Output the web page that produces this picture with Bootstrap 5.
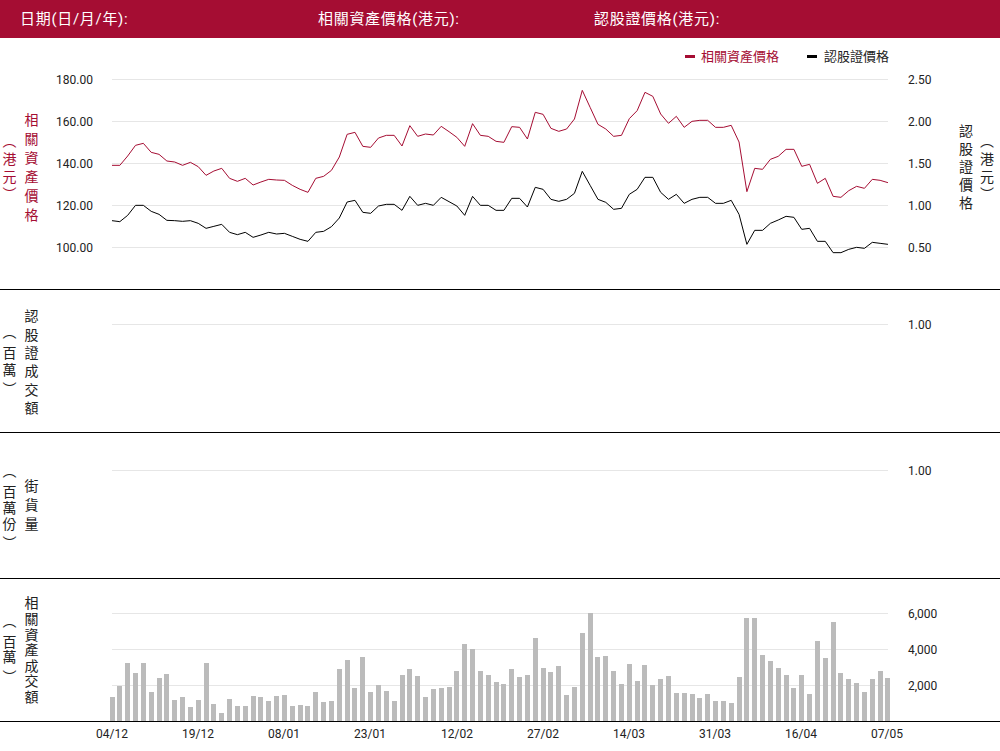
<!DOCTYPE html>
<html lang="zh-Hant">
<head>
<meta charset="utf-8">
<title>認股證走勢</title>
<link href="https://cdn.jsdelivr.net/npm/bootstrap@5.3.0/dist/css/bootstrap.min.css" rel="stylesheet">
<style>
html,body{margin:0;background:#fff;overflow:hidden}
body{font-family:Roboto,"Noto Sans CJK TC",sans-serif;color:#222;font-size:12px}
.top-bar{height:38px;background:#a50d33;color:#fff;font-size:15px;letter-spacing:.7px;line-height:38px}
.f1{width:318px;padding-left:20px}
.f2{width:276px}
.panel-a{height:252px}
.panel-b{height:143px}
.panel-c{height:146px}
.panel-d{height:143px}
.rule-b{border-bottom:1px solid #000}
.side-l{width:48px;flex:none;padding-left:1.5px;gap:8px}
.side-r{width:48px;flex:none;padding-left:6px;gap:7px}
.pad-a{padding-top:11px}
.pad-b{padding-top:6px}
.pad-c{padding-top:4px}
.pad-d{padding-top:2px}
.vtext{writing-mode:vertical-rl;font-size:14px;line-height:14px;white-space:nowrap;width:14px}
.s19{letter-spacing:5px}
.s18{letter-spacing:4.3px}
.s18r{letter-spacing:4px}
.s16{letter-spacing:1.6px}
.sp18{letter-spacing:3.7px}
.sp17{letter-spacing:2.7px}
.sp16{letter-spacing:2px}
.sp15{letter-spacing:1.6px}
.open-gap{letter-spacing:6.5px}
.close-gap{letter-spacing:5.5px}
.nudge2{margin-top:2px}
.lift4{margin-bottom:4px}
.lift2{margin-bottom:2px}
.crim{color:#a50d33}
.plot-col{width:904px;flex:none}
.legend-row{height:30px;padding-right:63px;padding-top:7px;gap:28px;font-size:13px;line-height:14px}
.dash{width:10px;height:3px}
.dash-red{background:#a50d33;margin-right:6px}
.dash-black{background:#000;margin-right:7px}
svg{display:block}
svg text{font-family:Roboto,"Noto Sans CJK TC",sans-serif;font-size:12px;fill:#222}
.grid-l{stroke:#e6e6e6;stroke-width:1;shape-rendering:crispEdges}
</style>
</head>
<body>
<div class="top-bar d-flex">
  <div class="f1">日期(日/月/年):</div>
  <div class="f2">相關資產價格(港元):</div>
  <div>認股證價格(港元):</div>
</div>

<div class="panel-a rule-b d-flex">
  <div class="side-l pad-a d-flex align-items-center">
    <div class="vtext crim sp18">（港元）</div>
    <div class="vtext crim s19 nudge2">相關資產價格</div>
  </div>
  <div class="plot-col">
    <div class="legend-row d-flex justify-content-end">
      <div class="d-flex align-items-center crim"><span class="dash dash-red"></span>相關資產價格</div>
      <div class="d-flex align-items-center"><span class="dash dash-black"></span>認股證價格</div>
    </div>
    <svg id="p1" width="904" height="221" viewBox="48 68 904 221"></svg>
  </div>
  <div class="side-r pad-a d-flex align-items-center">
    <div class="vtext s18r">認股證價格</div>
    <div class="vtext sp18">（港元）</div>
  </div>
</div>

<div class="panel-b rule-b d-flex">
  <div class="side-l pad-b d-flex align-items-center">
    <div class="vtext sp17 lift4"><span class="open-gap">（</span>百<span class="close-gap">萬</span>）</div>
    <div class="vtext s18">認股證成交額</div>
  </div>
  <svg id="p2" width="904" height="142" viewBox="48 290 904 142"></svg>
</div>

<div class="panel-c rule-b d-flex">
  <div class="side-l pad-c d-flex align-items-center">
    <div class="vtext sp16"><span class="open-gap">（</span>百萬<span class="close-gap">份</span>）</div>
    <div class="vtext s19">街貨量</div>
  </div>
  <svg id="p3" width="904" height="145" viewBox="48 433 904 145"></svg>
</div>

<div class="panel-d rule-b d-flex">
  <div class="side-l pad-d d-flex align-items-center">
    <div class="vtext sp15 lift2"><span class="open-gap">（</span>百<span class="close-gap">萬</span>）</div>
    <div class="vtext s16">相關資產成交額</div>
  </div>
  <svg id="p4" width="904" height="142" viewBox="48 579 904 142"></svg>
</div>

<svg id="p5" width="1000" height="29" viewBox="0 722 1000 29"></svg>

<script>
var NS='http://www.w3.org/2000/svg';
function add(id,tag,attrs,txt){var e=document.createElementNS(NS,tag);for(var k in attrs)e.setAttribute(k,attrs[k]);if(txt)e.textContent=txt;document.getElementById(id).appendChild(e);}
function grid(id,y){add(id,'line',{x1:112,x2:888,y1:y+.5,y2:y+.5,'class':'grid-l'});}
function tick(id,x,y,t,a){add(id,'text',{x:x,y:y+4.5,'text-anchor':a},t);}
var STEP=7.838;
var red=[286,286,258,226,220,247,253,273,276,286,277,290,316,303,295,325,334,325,345,336,328,330,331,346,358,367,325,319,301,261,193,187,229,232,
204,196,196,228,167,199,192,195,169,185,202,229,161,196,199,214,217,170,172,207,127,133,175,184,177,147,61,112,163,177,199,196,146,122,
67,79,132,160,139,172,154,151,151,172,172,166,216,365,295,298,268,259,238,238,289,283,340,325,379,382,362,349,355,328,331,338];
var blk=[452,455,436,406,406,424,433,451,452,454,452,460,475,469,463,487,494,487,502,495,487,492,490,499,508,514,487,484,470,444,396,391,427,430,
408,403,403,421,379,406,400,406,382,395,408,436,379,406,406,421,421,385,385,411,352,358,388,394,388,370,304,346,388,397,418,415,373,358,
322,322,367,388,373,400,388,382,382,400,400,391,433,523,481,481,460,450,439,442,478,475,514,514,548,548,538,532,535,517,520,523];
var bars=[351,318,249,279,249,336,294,282,360,351,381,360,249,372,399,357,378,378,348,351,363,348,345,378,375,378,336,366,363,267,240,324,231,336,315,333,363,285,267,288,351,327,324,321,273,192,207,273,285,306,
312,267,291,285,174,264,276,258,345,321,159,99,231,228,273,312,252,303,255,315,297,288,339,339,342,354,342,363,363,369,291,114,114,225,243,264,285,324,285,342,183,234,126,279,297,309,336,297,273,294];
function pts(a){return a.map(function(v,i){return (112+STEP*i).toFixed(2)+','+(70+v/3).toFixed(2);}).join(' ');}
[[79,'180.00','2.50'],[121,'160.00','2.00'],[163,'140.00','1.50'],[205,'120.00','1.00'],[247,'100.00','0.50']].forEach(function(r){
  grid('p1',r[0]);tick('p1',93,r[0],r[1],'end');tick('p1',908,r[0],r[2],'start');
});
add('p1','polyline',{points:pts(red),fill:'none',stroke:'#a50d33','stroke-width':1});
add('p1','polyline',{points:pts(blk),fill:'none',stroke:'#000','stroke-width':1});
grid('p2',324);tick('p2',908,324,'1.00','start');
grid('p3',470);tick('p3',908,470,'1.00','start');
[[613,'6,000'],[649,'4,000'],[685,'2,000']].forEach(function(r){grid('p4',r[0]);tick('p4',908,r[0],r[1],'start');});
bars.forEach(function(v,i){
  var t=Math.round(580+v/3);
  add('p4','rect',{x:Math.floor(110+STEP*i),y:t,width:5,height:721-t,fill:'#bbb','shape-rendering':'crispEdges'});
});
[[112,'04/12'],[198,'19/12'],[284,'08/01'],[370,'23/01'],[457,'12/02'],[543,'27/02'],[629,'14/03'],[715,'31/03'],[801,'16/04'],[887,'07/05']].forEach(function(r){
  tick('p5',r[0],733,r[1],'middle');
});
</script>
<script src="https://cdn.jsdelivr.net/npm/bootstrap@5.3.0/dist/js/bootstrap.bundle.min.js"></script>
</body>
</html>
